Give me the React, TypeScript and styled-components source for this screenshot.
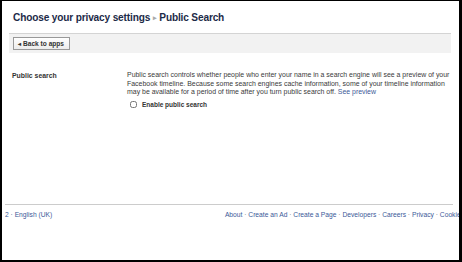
import styled, { createGlobalStyle } from "styled-components";

const GlobalStyle = createGlobalStyle`
  html, body {
    margin: 0;
    padding: 0;
    background: #ffffff;
  }
  body {
    font-family: "Liberation Sans", Arial, sans-serif;
    color: #333333;
  }
`;

const footerLinks = [
  "About",
  "Create an Ad",
  "Create a Page",
  "Developers",
  "Careers",
  "Privacy",
  "Cookies",
];

const App = () => {
  return (
    <>
      <GlobalStyle />
      <Frame>
        <Header>
          <Title>
            Choose your privacy settings <Arrow>▸</Arrow> Public Search
          </Title>
        </Header>
        <Toolbar>
          <BackButton>
            <span className="caret">◂</span> Back to apps
          </BackButton>
        </Toolbar>
        <Settings>
          <Label>Public search</Label>
          <Details>
            <Description>
              Public search controls whether people who enter your name in a
              search engine will see a preview of your Facebook timeline.
              Because some search engines cache information, some of your
              timeline information may be available for a period of time
              after you turn public search off. <Link>See preview</Link>
            </Description>
            <CheckRow>
              <Checkbox type="checkbox" />
              <span>Enable public search</span>
            </CheckRow>
          </Details>
        </Settings>
        <Footer>
          <FooterLeft>2 · English (UK)</FooterLeft>
          <FooterRight>
            {footerLinks.map((l, i) => (
              <span key={l}>
                {i > 0 && <Sep> · </Sep>}
                <Link>{l}</Link>
              </span>
            ))}
          </FooterRight>
        </Footer>
      </Frame>
    </>
  );
};

const Frame = styled.div`
  width: 462px;
  height: 262px;
  box-sizing: border-box;
  border-style: solid;
  border-color: #000000;
  border-width: 1px 3px 2px 2px;
  overflow: hidden;
  display: flex;
  flex-direction: column;
  background: #ffffff;
`;

const Header = styled.div`
  padding: 10px 0 0 11px;
  height: 22px;
`;

const Title = styled.h1`
  margin: 0;
  font-size: 10.1px;
  letter-spacing: -0.15px;
  font-weight: bold;
  color: #1c2a47;
  line-height: 13px;
`;

const Arrow = styled.span`
  color: #aaaaaa;
  font-size: 6.5px;
  vertical-align: 1px;
`;

const Toolbar = styled.div`
  margin: 0 8px 0 7px;
  height: 19px;
  background: #f2f2f2;
  border-top: 1px solid #d4d4d4;
  display: flex;
  align-items: center;
  padding-left: 4px;
`;

const BackButton = styled.button`
  font-family: inherit;
  font-size: 6.6px;
  font-weight: bold;
  color: #333333;
  height: 13px;
  padding: 0 5px 0 4px;
  border: 1px solid #999999;
  background: linear-gradient(#ffffff, #ececec);
  display: flex;
  align-items: center;
  gap: 2px;
  white-space: nowrap;
  .caret {
    font-size: 5.5px;
  }
`;

const Settings = styled.div`
  display: grid;
  grid-template-columns: 115px 328px;
  padding: 18px 0 0 10px;
  flex: 1;
`;

const Label = styled.div`
  font-size: 6.9px;
  font-weight: bold;
  line-height: 9px;
  color: #333333;
`;

const Details = styled.div`
  display: flex;
  flex-direction: column;
`;

const Description = styled.p`
  margin: 0;
  font-size: 6.95px;
  line-height: 8.5px;
  color: #3a3a3a;
`;

const Link = styled.a`
  color: #3b5998;
  text-decoration: none;
`;

const CheckRow = styled.label`
  display: flex;
  align-items: center;
  gap: 5px;
  margin: 4px 0 0 3px;
  font-size: 6.5px;
  font-weight: bold;
  color: #333333;
`;

const Checkbox = styled.input`
  margin: 0;
  width: 7px;
  height: 7px;
`;

const Footer = styled.div`
  margin: 0 0 41px 3px;
  width: 448px;
  border-top: 1px solid #cccccc;
  padding-top: 5px;
  display: flex;
  justify-content: space-between;
  font-size: 6.7px;
  line-height: 9px;
  white-space: nowrap;
`;

const FooterLeft = styled.div`
  color: #3b5998;
`;

const FooterRight = styled.div`
  margin-right: -11px;
`;

const Sep = styled.span`
  color: #777777;
`;

export default App;
